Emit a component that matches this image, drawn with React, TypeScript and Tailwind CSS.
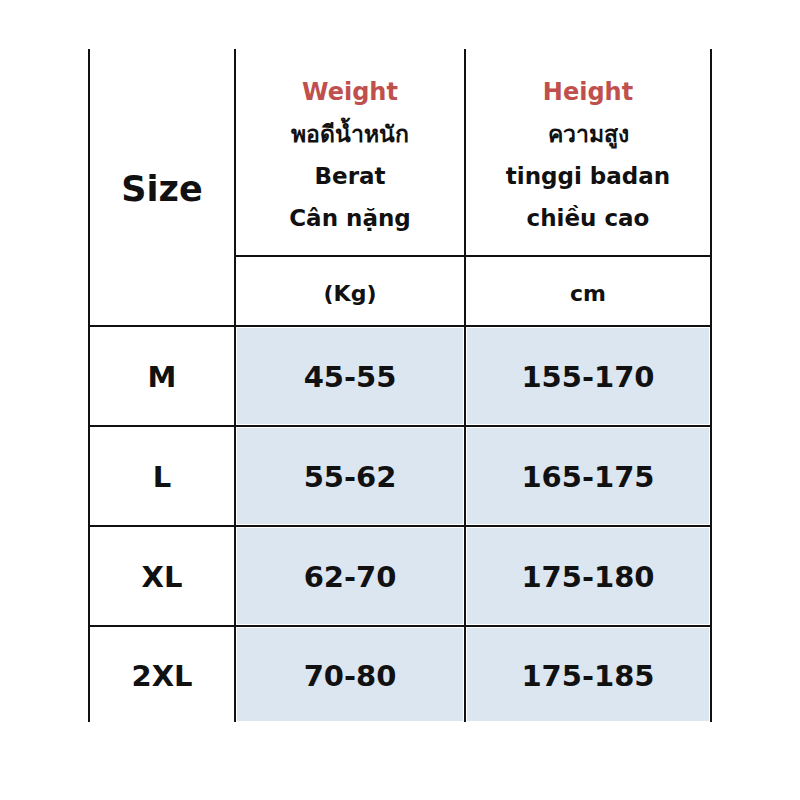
const rows = [
  { size: 'M', weight: '45-55', height: '155-170' },
  { size: 'L', weight: '55-62', height: '165-175' },
  { size: 'XL', weight: '62-70', height: '175-180' },
  { size: '2XL', weight: '70-80', height: '175-185' },
];

const font = { fontFamily: '"DejaVu Sans", "Noto Sans", sans-serif' };

export default function App() {
  return (
    <div className="w-[800px] h-[800px] bg-white pt-[49px]" style={font}>
      <div className="ml-[88px] w-[624px] px-[2px] bg-[#111] grid grid-cols-[144px_228px_244px] grid-rows-[206px_68px_98px_98px_98px_95px] gap-[2px] text-[#111]">
        {/* Size header spans both header rows */}
        <div className="row-span-2 bg-white flex items-center justify-center pt-[4px] text-[35px] font-bold">
          Size
        </div>

        <div className="bg-white flex flex-col items-center justify-center pt-[5px] leading-[42px]">
          <span className="text-[24px] font-bold text-[#c0504d]">Weight</span>
          <span className="text-[23px] font-bold">พอดีน้ำหนัก</span>
          <span className="text-[23px] font-bold">Berat</span>
          <span className="text-[23px] font-bold">Cân nặng</span>
        </div>
        <div className="bg-white flex flex-col items-center justify-center pt-[5px] leading-[42px]">
          <span className="text-[24px] font-bold text-[#c0504d]">Height</span>
          <span className="text-[23px] font-bold">ความสูง</span>
          <span className="text-[23px] font-bold">tinggi badan</span>
          <span className="text-[23px] font-bold">chiều cao</span>
        </div>

        <div className="bg-white flex items-center justify-center pt-[4px] text-[22px] font-bold">(Kg)</div>
        <div className="bg-white flex items-center justify-center pt-[4px] text-[22px] font-bold">cm</div>

        {rows.map((r) => (
          <>
            <div key={r.size + 's'} className="bg-white flex items-center justify-center pt-[4px] text-[29px] font-bold">
              {r.size}
            </div>
            <div key={r.size + 'w'} className="bg-white p-[1px]">
              <div className="h-full bg-[#dce6f1] flex items-center justify-center pt-[4px] text-[29px] font-bold">
                {r.weight}
              </div>
            </div>
            <div key={r.size + 'h'} className="bg-white p-[1px]">
              <div className="h-full bg-[#dce6f1] flex items-center justify-center pt-[4px] text-[29px] font-bold">
                {r.height}
              </div>
            </div>
          </>
        ))}
      </div>
    </div>
  );
}
